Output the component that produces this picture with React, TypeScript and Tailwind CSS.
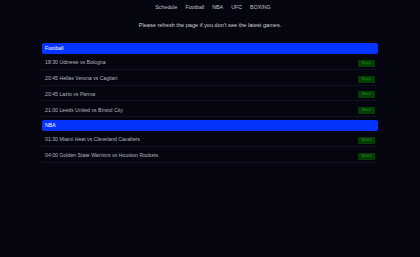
import React from "react";

const sections = [
  {
    name: "Football",
    games: [
      "18:30 Udinese vs Bologna",
      "20:45 Hellas Verona vs Cagliari",
      "20:45 Lazio vs Parma",
      "21:00 Leeds United vs Bristol City",
    ],
  },
  {
    name: "NBA",
    games: [
      "01:30 Miami Heat vs Cleveland Cavaliers",
      "04:00 Golden State Warriors vs Houston Rockets",
    ],
  },
];

export default function App() {
  return (
    <div
      className="w-[420px] h-[257px] bg-[#05050f] text-[#c8c8d0] overflow-hidden"
      style={{ fontFamily: '"Liberation Sans", Arial, sans-serif' }}
    >
      <nav className="flex justify-center gap-[8px] pt-[4px] pl-[6px] h-[14px] text-[5.3px] leading-[7px] text-[#c0c0d0]">
        <span>Schedule</span>
        <span>Football</span>
        <span>NBA</span>
        <span>UFC</span>
        <span>BOXING</span>
      </nav>
      <p className="text-center text-[5.6px] leading-[7px] mt-[8px] text-[#d0d0d8]">
        Please refresh the page if you don't see the latest games.
      </p>
      <div className="mx-[42px] mt-[14px] flex flex-col gap-[3px]">
        {sections.map((s) => (
          <div key={s.name} className="flex flex-col">
            <div className="h-[11px] bg-[#0533ff] rounded-[2px] px-[3px] flex items-center text-[5.2px] text-white">
              {s.name}
            </div>
            {s.games.map((g) => (
              <div
                key={g}
                className="h-[15.75px] pt-[4px] flex items-center justify-between pl-[3px] pr-[3px] border-b border-[#101020] text-[5.2px] text-[#b4b4c0]"
              >
                <span>{g}</span>
                <span className="bg-[#023d02] text-[#2a9a2a] text-[3.5px] leading-[7px] h-[7px] w-[17px] text-center rounded-[1px]">
                  Watch
                </span>
              </div>
            ))}
          </div>
        ))}
      </div>
    </div>
  );
}
